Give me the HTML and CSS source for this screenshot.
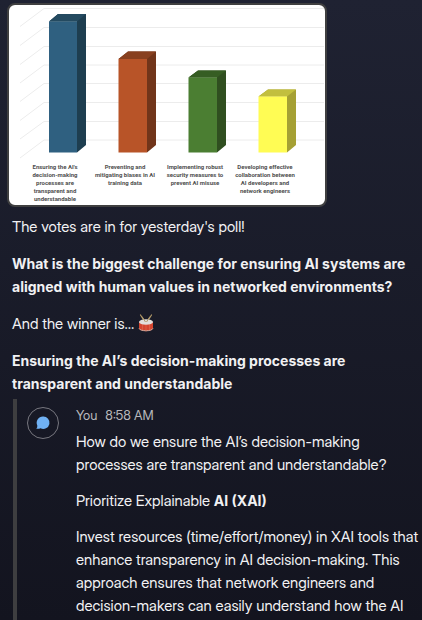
FILE: index.html
```html
<!DOCTYPE html>
<html lang="en">
<head>
<meta charset="utf-8">
<meta name="viewport" content="width=device-width, initial-scale=1">
<title>Poll results</title>
<link rel="stylesheet" href="styles.css">
</head>
<body>
<main class="thread">
  <figure class="chart">
    <svg class="chart-plot" viewBox="9 5 316 156" role="img" aria-label="Poll votes by answer">
      <g class="grid">
        <path d="M20 26.500 44 8.500H324M20 45.500 44 27.500H324M20 64.500 44 46.500H324M20 83 44 65H324M20 101.500 44 83.500H324M20 120.500 44 102.500H324M20 139 44 121.500H324M20 158 44 140H324"/>
      </g>
      <path fill="#1e3e50" d="M49 21.500 58 14H86V145L77 152.500V21.500Z"/>
      <path fill="#244a60" d="M49 21.500 58 14H86L77 21.500Z"/>
      <path fill="#2f6080" d="M49 21.500H77V152.500H49Z"/>
      <path fill="#71351a" d="M118.500 59 128 51.500H156V145L147 152.500V59Z"/>
      <path fill="#88401f" d="M118.500 59 128 51.500H156L147 59Z"/>
      <path fill="#b85428" d="M118.500 59H147V152.500H118.500Z"/>
      <path fill="#304f20" d="M188.500 77.500 198 70.500H226V145L217 152.500V77.500Z"/>
      <path fill="#365d23" d="M188.500 77.500 198 70.500H226L217 77.500Z"/>
      <path fill="#4b7e32" d="M188.500 77.500H217V152.500H188.500Z"/>
      <path fill="#a5a034" d="M258.500 96.500 268 89.500H296V145L287 152.500V96.500Z"/>
      <path fill="#c2bf3e" d="M258.500 96.500 268 89.500H296L287 96.500Z"/>
      <path fill="#fffc54" d="M258.500 96.500H287V152.500H258.500Z"/>
    </svg>
    <figcaption class="chart-labels">
      <span>Ensuring the AI's<br>decision-making<br>processes are<br>transparent and<br>understandable</span>
      <span>Preventing and<br>mitigating biases in AI<br>training data</span>
      <span>Implementing robust<br>security measures to<br>prevent AI misuse</span>
      <span>Developing effective<br>collaboration between<br>AI developers and<br>network engineers</span>
    </figcaption>
  </figure>

  <section class="post">
    <p>The votes are in for yesterday's poll!</p>
    <p><strong>What is the biggest challenge for ensuring AI systems are aligned with human values in networked environments?</strong></p>
    <p>And the winner is...
      <svg class="drum" viewBox="0 0 16 18" role="img" aria-label="drum">
        <path d="M2.500 1 7 8M13.500 1 9 8" stroke="#b29a69" stroke-width="1.200" stroke-linecap="round"/>
        <path fill="#d4452f" d="M1 8V14.500C2 18 14 18 15 14.500V8Z"/>
        <path d="M1 14.300C2 17.600 14 17.600 15 14.300" fill="none" stroke="#c9aaa0" stroke-width="1"/>
        <path d="M4.500 10V16M8 11V17M11.500 10V16" stroke="#e0664c" stroke-width=".7"/>
        <ellipse cx="8" cy="8" rx="7" ry="2.800" fill="#e2dedb"/>
        <path d="M4 2.500 7.500 8M12 2.500 8.500 8" stroke="#b29a69" stroke-width="1"/>
      </svg></p>
    <p><strong>Ensuring the AI’s decision-making processes are transparent and understandable</strong></p>
  </section>

  <article class="reply">
    <svg class="avatar" viewBox="0 0 32 32" aria-hidden="true">
      <circle cx="16" cy="16" r="15.500" fill="none" stroke="#77777f"/>
      <path fill="#70b1f4" d="M16 9.500A6.200 6.200 0 1 1 13.500 21.200Q11.500 22.200 9.300 21.700 10.600 20.300 10.300 18.500A6.200 6.200 0 0 1 16 9.500Z"/>
    </svg>
    <div class="reply-body">
      <header class="meta"><span>You</span><time datetime="08:58">8:58 AM</time></header>
      <p>How do we ensure the AI’s decision-making processes are transparent and understandable?</p>
      <p>Prioritize Explainable <strong>AI (XAI)</strong></p>
      <p>Invest resources (time/effort/money) in XAI tools that enhance transparency in AI decision-making. This approach ensures that network engineers and decision-makers can easily understand how the AI</p>
    </div>
  </article>
</main>
</body>
</html>
```
FILE: styles.css
```css
* {
  box-sizing: border-box;
}

body {
  margin: 0;
  background: linear-gradient(#1f2232, #13141f);
  color: #f1f1f3;
  font: 15px/23px "Inter Display", Inter, "Liberation Sans", sans-serif;
}

.thread {
  display: flex;
  flex-direction: column;
  min-height: 100vh;
  padding: 3px 2px 0 12px;
}

p {
  margin: 0;
}

strong {
  font: 700 14px/23px Inter, "Liberation Sans", sans-serif;
}

.chart {
  width: 320px;
  max-width: 100%;
  margin: 0 0 8px -5px;
  padding-bottom: 2px;
  overflow: hidden;
  border: 2px solid #3f3f40;
  border-radius: 8px;
  background: #fff;
}

.chart-plot {
  display: block;
  width: 100%;
}

.grid {
  fill: none;
  stroke: #ececec;
}

.chart-labels {
  display: grid;
  grid-template-columns: repeat(4, 70px);
  padding: 2px 0 0 11px;
  color: #505050;
  font: 700 6px/8px Roboto, sans-serif;
  text-align: center;
  white-space: nowrap;
}

.post {
  display: grid;
  gap: 14px;
}

.drum {
  width: 16px;
  height: 18px;
  vertical-align: -3px;
}

.reply {
  display: flex;
  flex: 1;
  gap: 17px;
  margin: 4px 0 0 1px;
  padding-left: 10px;
  border-left: 4px solid #3e3e40;
}

.avatar {
  flex: none;
  width: 32px;
  height: 32px;
  margin-top: 8px;
}

.reply-body {
  display: grid;
  align-content: start;
  gap: 13px;
  padding-top: 8px;
}

.meta {
  display: flex;
  gap: 8px;
  margin-bottom: -6px;
  color: #b8b8bc;
  font-size: 13px;
  line-height: 16px;
}
```
